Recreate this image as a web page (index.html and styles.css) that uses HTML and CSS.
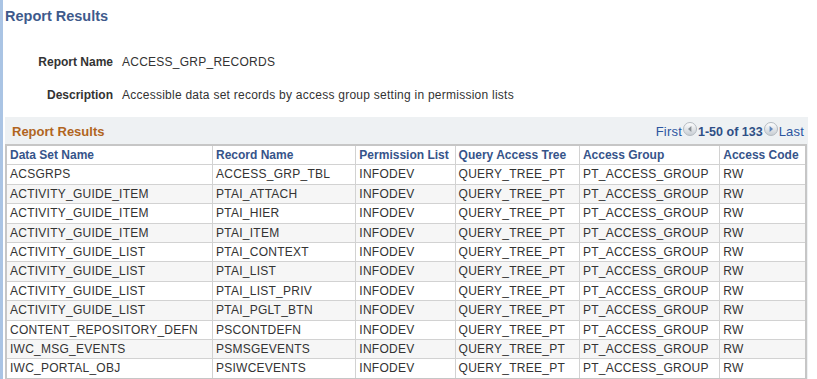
FILE: index.html
```html
<!DOCTYPE html>
<html lang="en">

<head>
  <meta charset="UTF-8">
  <meta name="viewport" content="width=device-width, initial-scale=1.0">
  <title>Report Results</title>
  <link rel="stylesheet" href="styles.css">
</head>

<body>
  <div class="page">
    <h1 class="page-title">Report Results</h1>

    <div class="report-info">
      <span class="info-label">Report Name</span>
      <span class="info-value">ACCESS_GRP_RECORDS</span>
      <span class="info-label">Description</span>
      <span class="info-value">Accessible data set records by access group setting in permission lists</span>
    </div>

    <div class="grid-box">
      <div class="grid-header">
        <span class="grid-title">Report Results</span>
        <div class="pager">
          <a class="pager-link">First</a>
          <span class="pager-btn">
            <svg width="14" height="14" viewBox="0 0 14 14">
              <defs>
                <linearGradient id="btnGrad" x1="0" y1="0" x2="0" y2="1">
                  <stop offset="0" stop-color="#ffffff"/>
                  <stop offset="1" stop-color="#c6ccd2"/>
                </linearGradient>
              </defs>
              <circle cx="7" cy="7" r="6.5" fill="url(#btnGrad)" stroke="#b4bac0" stroke-width="1"/>
              <path d="M8.4 3.9 L5 7 L8.4 10.1 Z" fill="#8a9096"/>
            </svg>
          </span>
          <span class="pager-count">1-50 of 133</span>
          <span class="pager-btn">
            <svg width="14" height="14" viewBox="0 0 14 14">
              <circle cx="7" cy="7" r="6.5" fill="url(#btnGrad)" stroke="#b4bac0" stroke-width="1"/>
              <path d="M5.6 3.9 L9 7 L5.6 10.1 Z" fill="#5f87bd"/>
            </svg>
          </span>
          <a class="pager-link">Last</a>
        </div>
      </div>

      <table class="results">
        <colgroup>
          <col class="col-set">
          <col class="col-record">
          <col class="col-perm">
          <col class="col-tree">
          <col class="col-group">
          <col class="col-code">
        </colgroup>
        <thead>
          <tr>
            <th>Data Set Name</th>
            <th>Record Name</th>
            <th>Permission List</th>
            <th>Query Access Tree</th>
            <th>Access Group</th>
            <th>Access Code</th>
          </tr>
        </thead>
        <tbody>
          <tr><td>ACSGRPS</td><td>ACCESS_GRP_TBL</td><td>INFODEV</td><td>QUERY_TREE_PT</td><td>PT_ACCESS_GROUP</td><td>RW</td></tr>
          <tr><td>ACTIVITY_GUIDE_ITEM</td><td>PTAI_ATTACH</td><td>INFODEV</td><td>QUERY_TREE_PT</td><td>PT_ACCESS_GROUP</td><td>RW</td></tr>
          <tr><td>ACTIVITY_GUIDE_ITEM</td><td>PTAI_HIER</td><td>INFODEV</td><td>QUERY_TREE_PT</td><td>PT_ACCESS_GROUP</td><td>RW</td></tr>
          <tr><td>ACTIVITY_GUIDE_ITEM</td><td>PTAI_ITEM</td><td>INFODEV</td><td>QUERY_TREE_PT</td><td>PT_ACCESS_GROUP</td><td>RW</td></tr>
          <tr><td>ACTIVITY_GUIDE_LIST</td><td>PTAI_CONTEXT</td><td>INFODEV</td><td>QUERY_TREE_PT</td><td>PT_ACCESS_GROUP</td><td>RW</td></tr>
          <tr><td>ACTIVITY_GUIDE_LIST</td><td>PTAI_LIST</td><td>INFODEV</td><td>QUERY_TREE_PT</td><td>PT_ACCESS_GROUP</td><td>RW</td></tr>
          <tr><td>ACTIVITY_GUIDE_LIST</td><td>PTAI_LIST_PRIV</td><td>INFODEV</td><td>QUERY_TREE_PT</td><td>PT_ACCESS_GROUP</td><td>RW</td></tr>
          <tr><td>ACTIVITY_GUIDE_LIST</td><td>PTAI_PGLT_BTN</td><td>INFODEV</td><td>QUERY_TREE_PT</td><td>PT_ACCESS_GROUP</td><td>RW</td></tr>
          <tr><td>CONTENT_REPOSITORY_DEFN</td><td>PSCONTDEFN</td><td>INFODEV</td><td>QUERY_TREE_PT</td><td>PT_ACCESS_GROUP</td><td>RW</td></tr>
          <tr><td>IWC_MSG_EVENTS</td><td>PSMSGEVENTS</td><td>INFODEV</td><td>QUERY_TREE_PT</td><td>PT_ACCESS_GROUP</td><td>RW</td></tr>
          <tr><td>IWC_PORTAL_OBJ</td><td>PSIWCEVENTS</td><td>INFODEV</td><td>QUERY_TREE_PT</td><td>PT_ACCESS_GROUP</td><td>RW</td></tr>
        </tbody>
      </table>
    </div>
  </div>
</body>

</html>
```

FILE: styles.css
```css
body {
  margin: 0;
  font-family: "Liberation Sans", Arial, sans-serif;
  font-size: 12px;
  letter-spacing: 0.25px;
  color: #333333;
  background: #ffffff;
}

.page {
  min-height: 100vh;
  border-left: 3px solid #aac4e4;
  padding: 7px 0 0 2px;
  box-sizing: border-box;
  overflow: hidden;
}

.page-title {
  margin: 0;
  font-size: 14.5px;
  line-height: 18px;
  font-weight: bold;
  letter-spacing: 0;
  color: #3e5a8c;
}

.report-info {
  display: grid;
  grid-template-columns: 108px auto;
  column-gap: 9px;
  row-gap: 19px;
  margin-top: 30px;
  line-height: 14px;
}

.info-label {
  font-weight: bold;
  text-align: right;
  letter-spacing: 0;
}

.info-value {
  color: #333333;
}

.grid-box {
  width: 803px;
  margin-top: 15px;
  background-color: #eef1f3;
}

.grid-header {
  display: flex;
  justify-content: space-between;
  align-items: center;
  height: 27px;
  padding: 1px 4px 0 7px;
  box-sizing: border-box;
}

.grid-title {
  font-size: 13px;
  font-weight: bold;
  letter-spacing: 0;
  color: #b1651e;
}

.pager {
  display: flex;
  align-items: center;
  font-size: 13px;
  letter-spacing: 0.2px;
  padding-top: 1px;
}

.pager-link {
  color: #2b55a0;
}

.pager-btn {
  display: flex;
  margin: 0 1px;
  position: relative;
  top: -3px;
}

.pager-count {
  font-size: 12.5px;
  font-weight: bold;
  letter-spacing: 0;
  color: #2e4f86;
}

.results {
  width: 802px;
  table-layout: fixed;
  border-collapse: collapse;
  border: 2px solid #c6c6c6;
  background: #ffffff;
}

.col-set { width: 206px; }
.col-record { width: 143px; }
.col-perm { width: 99px; }
.col-tree { width: 124px; }
.col-group { width: 140px; }
.col-code { width: 86px; }

th, td {
  padding: 2px 3px;
  height: 14.4px;
  line-height: 14.4px;
  text-align: left;
  white-space: nowrap;
  overflow: hidden;
  border: 1px solid #d2d2d2;
}

th {
  font-weight: bold;
  letter-spacing: 0;
  color: #36548a;
}

tbody tr:nth-child(even) {
  background-color: #f6f6f6;
}
```
